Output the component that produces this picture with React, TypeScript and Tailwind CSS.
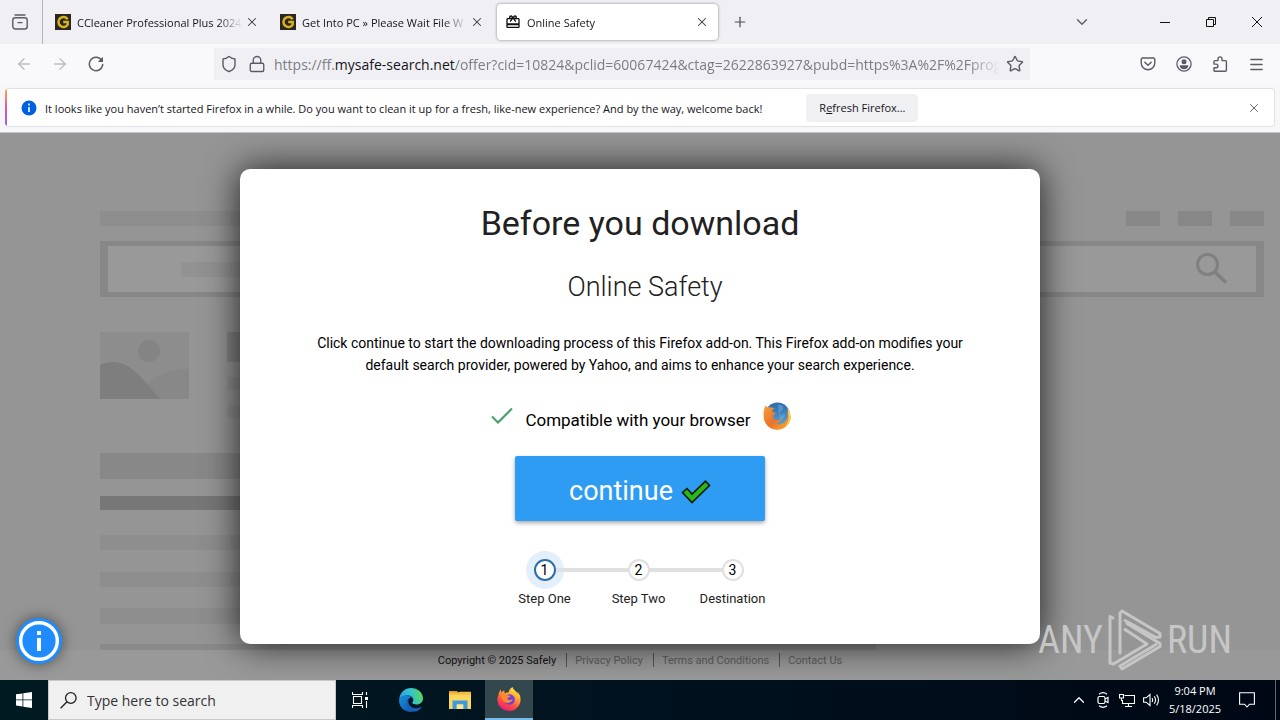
import React from "react";
import { ArrowLeft, ArrowRight, ChevronDown, ChevronUp, Lock, Menu, Plus, Shield, Star, X } from "lucide-react";

const UI = "font-['Open_Sans','Noto_Sans',sans-serif]";

function GIcon() {
  return (
    <svg viewBox="0 0 16 16" className="size-4 shrink-0" aria-hidden="true">
      <rect width="16" height="16" fill="#2b2622" />
      <path d="M12.6 5.2A5 5 0 1 0 12.7 10.6V8H8.2" fill="none" stroke="#d9b31c" strokeWidth="2.5" />
    </svg>
  );
}

function GiftIcon() {
  return (
    <svg viewBox="0 0 24 24" className="size-4 shrink-0" fill="#111" aria-hidden="true">
      <path d="M20 6h-2.18c.11-.31.18-.65.18-1 0-1.66-1.34-3-3-3-1.05 0-1.96.54-2.5 1.35l-.5.67-.5-.68C10.960 2.540 10.050 2 9 2 7.340 2 6 3.340 6 5c0 .35.07.69.18 1H4c-1.110 0-1.990.89-1.990 2L2 19c0 1.110.89 2 2 2h16c1.110 0 2-.89 2-2V8c0-1.110-.89-2-2-2zm-5-2c.55 0 1 .45 1 1s-.45 1-1 1-1-.45-1-1 .45-1 1-1zM9 4c.55 0 1 .45 1 1s-.45 1-1 1-1-.45-1-1 .45-1 1-1zm11 15H4v-2h16v2zm0-5H4V8h5.080L7 10.830 8.620 12 11 8.760l1-1.360 1 1.360L15.380 12 17 10.830 14.920 8H20v6z" />
    </svg>
  );
}

function Tab({ title, icon, active }: { title: string; icon: React.ReactNode; active?: boolean }) {
  return (
    <div
      className={
        active
          ? "flex h-9 w-[221px] items-center rounded bg-white pr-1.5 pl-2 shadow-[0_0_3px_rgba(0,0,0,0.45)]"
          : "flex h-9 w-[221px] items-center rounded pr-1.5 pl-2"
      }
    >
      {icon}
      <span className="ml-1.5 min-w-0 flex-1 overflow-hidden pt-0.5 text-[11px] leading-4 whitespace-nowrap text-[#15141a] [mask-image:linear-gradient(to_left,transparent,black_24px)]">
        {title}
      </span>
      <button type="button" aria-label={`Close ${title}`} className="flex size-5 items-center justify-center">
        <X className="size-3.5 text-[#3a3a42]" strokeWidth={1.8} />
      </button>
    </div>
  );
}

function TabStrip() {
  return (
    <header className="flex h-11 items-center bg-[#efeff4]">
      <button type="button" aria-label="Firefox View" className="flex h-11 w-[43px] items-center justify-center border-r border-[#b4b4bc] pr-0.5">
        <svg viewBox="0 0 16 16" className="size-4" fill="none" stroke="#5b5b66" strokeWidth="1.4" strokeLinecap="round" aria-hidden="true">
          <path d="M3 1h10" />
          <rect x="0.800" y="3.800" width="14.400" height="11.200" rx="2.500" />
          <path d="M6 8.600h4" />
        </svg>
      </button>
      <div className="ml-1 flex gap-1">
        <Tab title="CCleaner Professional Plus 2024" icon={<GIcon />} />
        <Tab title="Get Into PC » Please Wait File W" icon={<GIcon />} />
        <Tab title="Online Safety" icon={<GiftIcon />} active />
      </div>
      <button type="button" aria-label="New tab" className="ml-2 flex size-7 items-center justify-center">
        <Plus className="size-4 text-[#4a4a55]" strokeWidth={1.8} />
      </button>
      <div className="flex-1" />
      <button type="button" aria-label="List all tabs" className="mr-11 flex size-8 items-center justify-center">
        <ChevronDown className="size-[18px] text-[#5b5b66]" strokeWidth={1.8} />
      </button>
      <button type="button" aria-label="Minimize" className="flex h-8 w-[46px] items-center justify-center">
        <svg viewBox="0 0 10 10" className="size-2.5" stroke="#111" aria-hidden="true"><path d="M0 5.500h10" /></svg>
      </button>
      <button type="button" aria-label="Restore" className="flex h-8 w-[46px] items-center justify-center">
        <svg viewBox="0 0 10 10" className="size-2.5" fill="none" stroke="#111" aria-hidden="true"><path d="M.5 2.500h7v7h-7zM2.500 2.500v-2h7v7h-2" /></svg>
      </button>
      <button type="button" aria-label="Close window" className="flex h-8 w-[46px] items-center justify-center">
        <svg viewBox="0 0 10 10" className="size-2.5" fill="none" stroke="#111" aria-hidden="true"><path d="M0 0l10 10M10 0L0 10" /></svg>
      </button>
    </header>
  );
}

function NavButton({ label, children }: { label: string; children: React.ReactNode }) {
  return (
    <button type="button" aria-label={label} className="flex h-8 w-9 items-center justify-center text-[#5b5b66]">
      {children}
    </button>
  );
}

function NavBar() {
  return (
    <nav className="flex h-10 items-center bg-[#f9f9fb] px-1.5">
      <NavButton label="Back"><ArrowLeft className="size-[18px] text-[#bcbcc4]" strokeWidth={1.8} /></NavButton>
      <NavButton label="Forward"><ArrowRight className="size-[18px] text-[#bcbcc4]" strokeWidth={1.8} /></NavButton>
      <NavButton label="Reload">
        <svg viewBox="0 0 16 16" className="size-4" fill="none" stroke="#5b5b66" strokeWidth="1.500" aria-hidden="true">
          <path d="M13.900 4.800A6.700 6.700 0 1 0 14.700 8.500" strokeLinecap="round" />
          <path d="M15 .8v5.200H9.800z" fill="#5b5b66" stroke="none" />
        </svg>
      </NavButton>
      <div className="mx-[100px] flex h-8 min-w-0 flex-1 items-center bg-[#f0f0f4] pr-1 pl-1.5">
        <Shield className="size-[18px] shrink-0 text-[#5b5b66]" strokeWidth={1.9} />
        <Lock className="ml-2.5 size-[18px] shrink-0 text-[#5b5b66]" strokeWidth={1.8} />
        <label htmlFor="address" className="ml-2 pt-0.5 text-sm whitespace-nowrap text-[#7c7c85]">
          https://ff.<span className="text-[#15141a]">mysafe-search.net</span>
        </label>
        <input
          id="address"
          className="min-w-0 flex-1 bg-transparent pt-0.5 text-sm text-[#7c7c85] outline-none [mask-image:linear-gradient(to_left,transparent,black_32px)]"
          defaultValue="/offer?cid=10824&pclid=60067424&ctag=2622863927&pubd=https%3A%2F%2Fprogramdl.com"
        />
        <button type="button" aria-label="Bookmark this page" className="ml-1 flex h-7 w-[22px] items-center justify-center">
          <Star className="size-[18px] text-[#5b5b66]" strokeWidth={1.9} />
        </button>
      </div>
      <NavButton label="Save to Pocket">
        <svg viewBox="0 0 16 16" className="size-4" fill="none" stroke="currentColor" strokeWidth="1.400" strokeLinecap="round" strokeLinejoin="round" aria-hidden="true">
          <path d="M2.800 2h10.400a1.600 1.600 0 0 1 1.600 1.600V7a6.800 6.800 0 0 1-13.600 0V3.600A1.600 1.600 0 0 1 2.800 2z" />
          <path d="M4.800 6.300L8 9.300l3.200-3" />
        </svg>
      </NavButton>
      <NavButton label="Account">
        <svg viewBox="0 0 16 16" className="size-4" fill="currentColor" aria-hidden="true">
          <circle cx="8" cy="8" r="7.100" fill="none" stroke="currentColor" strokeWidth="1.300" />
          <circle cx="8" cy="5.700" r="2.500" />
          <path d="M3.600 9.300h8.800c0 2.500-2 3.900-4.400 3.900s-4.400-1.400-4.400-3.900z" />
        </svg>
      </NavButton>
      <NavButton label="Extensions">
        <svg viewBox="0 0 16 16" className="size-4" fill="none" stroke="currentColor" strokeWidth="1.400" strokeLinejoin="round" aria-hidden="true">
          <path d="M6 4.600V2.900a2 2 0 0 1 4 0v1.700h3.400a1 1 0 0 1 1 1v8.600a1 1 0 0 1-1 1H3a1 1 0 0 1-1-1v-2.500h2.100a1.800 1.800 0 0 0 0-3.600H2V5.600a1 1 0 0 1 1-1z" />
        </svg>
      </NavButton>
      <NavButton label="Open application menu">
        <Menu className="size-[17px]" strokeWidth={1.9} />
      </NavButton>
    </nav>
  );
}

function NotificationBar() {
  return (
    <div className="border-b border-[#c4c4c8] bg-[#f7f7f9] px-[5px] pt-1 pb-[5px]">
      <div className="flex h-[39px] items-center overflow-hidden rounded border border-l-0 border-[#e2e2e6] bg-white">
        <div className="h-full w-0.5 bg-linear-to-b from-[#ffa436] via-[#e5539a] to-[#9059ff]" />
        <svg viewBox="0 0 16 16" className="ml-3.5 size-4 shrink-0" aria-hidden="true">
          <circle cx="8" cy="8" r="7.500" fill="#0060df" />
          <path d="M8 3.500v2M8 7v5" stroke="#fff" strokeWidth="1.600" />
        </svg>
        <p className="ml-2 pt-0.5 text-[11px] leading-4 whitespace-nowrap text-[#15141a]">
          It looks like you haven’t started Firefox in a while. Do you want to clean it up for a fresh, like-new experience? And by the way, welcome back!
        </p>
        <button type="button" className="ml-11 h-7 w-28 rounded bg-[#f0f0f3] pt-0.5 text-[11px] whitespace-nowrap text-[#15141a]">
          R<span className="underline">e</span>fresh Firefox...
        </button>
        <div className="flex-1" />
        <button type="button" aria-label="Dismiss" className="mr-2.5 flex size-5 items-center justify-center">
          <X className="size-3.5 text-[#5b5b66]" strokeWidth={1.6} />
        </button>
      </div>
    </div>
  );
}

function Backdrop() {
  return (
    <div className="flex flex-col pt-[78px] pr-4 pl-[100px]" aria-hidden="true">
      <div className="flex h-[15px] gap-[18px]">
        <div className="w-1/3 bg-[#8e8e8e]" />
        <div className="flex-1" />
        <div className="w-[34px] bg-[#878787]" />
        <div className="w-[34px] bg-[#878787]" />
        <div className="w-[34px] bg-[#878787]" />
      </div>
      <div className="mt-[15px] flex h-14 items-center border-x-8 border-y-[5px] border-[#878787] bg-[#999999] pr-7 pl-[73px]">
        <div className="h-[15px] w-1/2 bg-[#929292]" />
        <div className="flex-1" />
        <svg viewBox="0 0 32 32" className="size-8" fill="none" stroke="#808080" strokeWidth="3.200" aria-hidden="true">
          <circle cx="11.500" cy="11.500" r="10" />
          <path d="M19 19l11 10.500" strokeWidth="3.800" />
        </svg>
      </div>
      <div className="mt-[35px] flex gap-[38px]">
        <svg viewBox="0 0 89 67" className="h-[67px] w-[89px]" aria-hidden="true">
          <rect width="89" height="67" fill="#8d8d8d" />
          <circle cx="49" cy="19" r="11" fill="#848484" />
          <path d="M36 67C48 50 60 37 89 37v30z" fill="#888" />
          <path d="M0 33C26 22 40 44 60 67H0z" fill="#7e7e7e" />
        </svg>
        <div className="flex h-[86px] w-1/4 flex-col justify-between">
          <div className="h-[30px] bg-[#848484]" />
          <div className="h-[13px] bg-[#8e8e8e]" />
          <div className="h-[13px] bg-[#8e8e8e]" />
        </div>
      </div>
      <div className="mt-[35px] h-[26px] w-2/3 bg-[#888888]" />
      <div className="mt-[17px] h-3.5 w-2/3 bg-[#777777]" />
      <div className="mt-[25px] h-[15px] w-2/3 bg-[#8e8e8e]" />
      <div className="mt-[22px] h-[15px] w-2/3 bg-[#8e8e8e]" />
      <div className="mt-[21px] h-4 w-2/3 bg-[#8e8e8e]" />
      <div className="mt-5 h-1.5 w-2/3 bg-[#8a8a8a]" />
    </div>
  );
}

function OldFirefox() {
  return (
    <svg viewBox="0 0 28 28" className="size-7" aria-hidden="true">
      <defs>
        <linearGradient id="globe" x1="0" y1="0" x2="0" y2="1">
          <stop offset="0" stopColor="#2c6aa8" />
          <stop offset="1" stopColor="#5aa7de" />
        </linearGradient>
        <linearGradient id="fox" x1="0" y1="0" x2="1" y2="1">
          <stop offset="0" stopColor="#f7a23c" />
          <stop offset=".5" stopColor="#e9722a" />
          <stop offset="1" stopColor="#f9b233" />
        </linearGradient>
      </defs>
      <circle cx="14.500" cy="13" r="12.500" fill="url(#globe)" />
      <path d="M15 3c4-1 6 2 5 4s-4 2-3 5 4 1 4-2c2 5-1 8-4 8" fill="#6db4e8" opacity=".5" />
      <path d="M2.500 3.500C3.500 5 5 5.500 7 5.300c2 .1 3 .7 4.500 1.300-1.800.7-2.500 1.800-2.300 3.300l3.300.7c.3 1.500-1.500 2-2.600 2.900.1 3 2.100 5 5.100 4.500 2-.4 2.500-1.700 4-1.200-1.500 3.700-4.500 5-7.500 4.700 6 2.500 12.500-1 13-7.500.2-2-.2-3.500-.7-5C27.500 11 28 14 27.500 17A13.600 13.600 0 0 1 .6 14.500C.3 10.500 1 6.500 2.500 3.500z" fill="url(#fox)" />
      <path d="M24.500 6c2.500 3 3.400 7 3 11-.8 3.500-2.500 6-5.500 8 3-4 4.500-8 3.500-12z" fill="#fbd04a" />
    </svg>
  );
}

const steps = [
  { n: 1, label: "Step One" },
  { n: 2, label: "Step Two" },
  { n: 3, label: "Destination" },
];

function Stepper() {
  return (
    <ol className="mt-[38px] mr-[3px] flex">
      {steps.map((s, i) => (
        <li key={s.n} className="flex w-[94px] flex-col items-center">
          <div className="flex w-full items-center">
            <div className={i === 0 ? "h-1 flex-1" : "h-1 flex-1 bg-[#e0e0e0]"} />
            <span
              className={
                i === 0
                  ? "flex size-[22px] items-center justify-center rounded-full border-2 border-[#2f6fa8] bg-white text-sm text-black ring-8 ring-[#e3effa]"
                  : "flex size-[22px] items-center justify-center rounded-full border-2 border-[#e0e0e0] bg-white text-sm text-black"
              }
            >
              {s.n}
            </span>
            <div className={i === 2 ? "h-1 flex-1" : "h-1 flex-1 bg-[#e0e0e0]"} />
          </div>
          <span className="mt-2 text-[13px] leading-5 text-[#222]">{s.label}</span>
        </li>
      ))}
    </ol>
  );
}

function OfferDialog() {
  return (
    <section
      role="dialog"
      aria-labelledby="offer-title"
      className="absolute inset-x-0 top-9 mx-auto flex h-[475px] max-w-[800px] flex-col items-center rounded-[10px] bg-white pt-8 text-center shadow-[0_0_36px_rgba(0,0,0,0.8)]"
    >
      <h1 id="offer-title" className="text-[34px] leading-11 text-[#212121]">Before you download</h1>
      <h2 className="mt-5 ml-2.5 text-[27px] leading-11 font-light text-[#212121]">Online Safety</h2>
      <p className="mt-[23px] max-w-[660px] text-sm leading-[22px] text-black">
        Click continue to start the downloading process of this Firefox add-on. This Firefox add-on modifies your default search provider, powered by Yahoo, and aims to enhance your search experience.
      </p>
      <div className="mt-[26px] ml-0.5 flex h-8 items-center">
        <svg viewBox="0 0 22 18" className="mr-3 mb-1 h-[18px] w-[22px]" fill="none" stroke="#43a067" strokeWidth="2" aria-hidden="true">
          <path d="M1 9.500l6 6L21 1.500" />
        </svg>
        <span className="mt-1 text-[17px] leading-6 text-black">Compatible with your browser</span>
        <span className="mb-1 ml-3"><OldFirefox /></span>
      </div>
      <button type="button" className="mt-[22px] flex h-[65px] w-[250px] items-center justify-center gap-2 rounded-xs bg-[#2f9cf4] pt-1.5 text-[27px] text-white shadow-[0_2px_4px_rgba(0,0,0,0.35)]">
        continue
        <svg viewBox="0 0 30 24" className="h-6 w-[30px]" aria-hidden="true">
          <path d="M1.500 12.500l4.500-4 5 5.500L24.500 1.200l4 4.300L11 22.500z" fill="#2db51c" stroke="#0b1a08" strokeWidth="1.600" />
        </svg>
      </button>
      <Stepper />
    </section>
  );
}

function Watermark() {
  return (
    <div className="absolute right-12 bottom-2 flex h-16 items-center gap-1 font-['Liberation_Sans_Narrow','Roboto_Condensed','Liberation_Sans',sans-serif] text-[38px] leading-none text-[#c6c6c6]">
      <span>ANY</span>
      <svg viewBox="0 0 56 62" className="h-[62px] w-14" fill="none" stroke="#c6c6c6" strokeWidth="3" strokeLinejoin="round" strokeLinecap="round" aria-hidden="true">
        <path d="M6 9L3 7.500v46.500l3.500 1L40 35l-22-14.500" />
        <path d="M13 44V4l2-2 38 22.500v3.500l-4 .5-31-17" />
        <path d="M20 14.500l33 20v3L15 60l-2-3 36-21.500" />
      </svg>
      <span>RUN</span>
    </div>
  );
}

function PageFooter() {
  return (
    <footer className="flex h-[30px] justify-center bg-[#999999] pt-[3px] text-[11px] leading-[15px]">
      <span className="px-2.5 text-[#111]">Copyright © 2025 Safely</span>
      <a href="#privacy" className="h-3.5 border-l border-[#555] pr-2.5 pl-2 text-[#5e5e5e]">Privacy Policy</a>
      <a href="#terms" className="h-3.5 border-l border-[#555] pr-2.5 pl-2 text-[#5e5e5e]">Terms and Conditions</a>
      <a href="#contact" className="h-3.5 border-l border-[#555] pr-2.5 pl-2 text-[#5e5e5e]">Contact Us</a>
    </footer>
  );
}

function EdgeIcon() {
  return (
    <svg viewBox="0 0 24 24" className="size-6" aria-hidden="true">
      <defs>
        <linearGradient id="edgeTop" x1="0" y1=".5" x2="1" y2=".3">
          <stop offset="0" stopColor="#2aa5e0" />
          <stop offset=".5" stopColor="#2fc3d2" />
          <stop offset="1" stopColor="#62d84e" />
        </linearGradient>
        <linearGradient id="edgeLow" x1="0" y1="0" x2="1" y2="1">
          <stop offset="0" stopColor="#1b8fe0" />
          <stop offset="1" stopColor="#0d4fa0" />
        </linearGradient>
      </defs>
      <path d="M.2 11C1 4.500 6 0 12 0c6.500 0 12 4.500 12 10.500 0 3.500-2.800 6-6.300 6-2.500 0-4.400-.8-4.400-1.700 0-.6 1-1 1-2.800C14.300 9.500 12 7.500 8.500 7.500 4.800 7.500 1.500 9 .2 11z" fill="url(#edgeTop)" />
      <path d="M.1 12C.5 8.500 4.500 7 8.500 7.500c2 .3 3.500 1 4.500 2-3 0-5 2.500-5 5.500 0 4.500 4 8 9 7.300-1.500 1.100-3.500 1.700-5.500 1.700C5 24-.4 18.500.1 12z" fill="url(#edgeLow)" />
      <path d="M9.700 11.200c-1.500 4.500 2 9 7 9 2 0 3.800-.6 5.300-1.300.4-.2.8.2.5.6-1.300 1.800-3 3.100-5.200 3.900-5.500.3-9.800-3.300-9.800-8 0-1.600.8-3.200 2.200-4.200z" fill="#1560b8" />
    </svg>
  );
}

function ExplorerIcon() {
  return (
    <svg viewBox="0 0 24 24" className="size-6" aria-hidden="true">
      <path d="M1 3h8l2 2.500h-10z" fill="#e29b1e" />
      <path d="M1 4.800h22V21H1z" fill="#fdd662" />
      <path d="M1 4.800h9l1.500-1H23v3H1z" fill="#f5bf3d" />
      <path d="M4.500 12.500h15V21h-4.300v-4.500H8.800V21H4.500z" fill="#3d9bdc" />
      <path d="M8.800 16.500h6.400V21H8.800z" fill="#fbe597" />
    </svg>
  );
}

function FirefoxIcon() {
  return (
    <svg viewBox="0 0 24 24" className="size-6" aria-hidden="true">
      <defs>
        <linearGradient id="ff" x1=".8" y1="0" x2=".3" y2="1">
          <stop offset="0" stopColor="#fff04a" />
          <stop offset=".35" stopColor="#ffa92e" />
          <stop offset=".7" stopColor="#ff4a45" />
          <stop offset="1" stopColor="#e8187c" />
        </linearGradient>
      </defs>
      <path d="M22.800 8.300c-.6-1.500-1.700-3-2.600-3.500.8 1.400 1.100 2.500 1.200 3C20 4.300 16.700 3.500 15.500 0c-2.800 1.600-3.700 4-3.700 5.200-1.500.1-2.700.5-3.800 1.200-.8-1.200-.7-2.300-.5-3.200-1.300.6-2.300 1.500-3 2.400-.6-.8-.5-2.300-.5-3.200C2.400 3.800 1.600 6 1.300 8.500.4 10 .2 12 .4 13.500A11.500 11.500 0 0 0 12 24c7 0 11.600-5.600 11.600-11.600 0-1.500-.3-2.900-.8-4.100z" fill="url(#ff)" />
      <circle cx="12.500" cy="12.500" r="5.300" fill="#6b3fe0" />
      <path d="M4.500 8.500c2-1.500 4-1 5.500-.2 2 .2 3.500.2 3.500.9-.6 1.300-3 1-3.200 2.800 1.400 1.600 3.800.5 5.500.6-1 3-5 4.300-8.300 2.400C5.500 13.500 4.500 11 4.500 8.500z" fill="#ff8a2b" />
    </svg>
  );
}

function Taskbar() {
  return (
    <footer className={`${UI} flex h-10 items-stretch bg-linear-to-r from-[#001a22] via-[#00121f] to-[#000714] text-white`}>
      <button type="button" aria-label="Start" className="flex w-12 items-center justify-center">
        <svg viewBox="0 0 16 16" className="size-4" fill="#fff" aria-hidden="true">
          <path d="M0 2.300l6.500-.9v6.100H0zM7.300 1.300L16 0v7.500H7.300zM0 8.300h6.500v6.200L0 13.600zM7.300 8.300H16V16l-8.700-1.300z" />
        </svg>
      </button>
      <label className="flex w-72 items-center border border-[#c8c8c8] bg-[#f0f0f0] pl-[11px]">
        <svg viewBox="0 0 17 17" className="size-[17px] shrink-0" fill="none" stroke="#222" strokeWidth="1.300" aria-hidden="true">
          <circle cx="10.800" cy="6" r="5.300" />
          <path d="M7 9.800L.6 16.300" />
        </svg>
        <input
          aria-label="Type here to search"
          placeholder="Type here to search"
          className="ml-2.5 min-w-0 flex-1 bg-transparent pt-0.5 text-sm outline-none placeholder:text-[#333]"
        />
      </label>
      <button type="button" aria-label="Task View" className="flex w-12 items-center justify-center">
        <svg viewBox="0 0 16 16" className="size-4" fill="none" stroke="#fff" strokeWidth="1.100" aria-hidden="true">
          <path d="M.5 0v2.500h10V0M.5 16v-2.500h10V16M1.500 4.500h8v7h-8zM14.500 0v3M14.500 9v7" />
          <path d="M13 5h3v3h-3z" fill="#fff" stroke="none" />
        </svg>
      </button>
      <div className="ml-[3px] flex gap-px">
        <button type="button" aria-label="Microsoft Edge" className="flex w-12 items-center justify-center"><EdgeIcon /></button>
        <button type="button" aria-label="File Explorer" className="flex w-12 items-center justify-center"><ExplorerIcon /></button>
        <button type="button" aria-label="Firefox" className="flex w-12 items-center justify-center border-b-2 border-[#76b9ed] bg-[#33474f]"><FirefoxIcon /></button>
      </div>
      <div className="flex-1" />
      <div className="flex">
        <button type="button" aria-label="Show hidden icons" className="flex w-6 items-center justify-center"><ChevronUp className="size-[18px]" strokeWidth={1.6} /></button>
        <button type="button" aria-label="Meet Now" className="flex w-6 items-center justify-center">
          <svg viewBox="0 0 16 16" className="size-4" fill="none" stroke="#fff" strokeWidth="1.200" aria-hidden="true">
            <rect x="3" y="4.500" width="7" height="7" rx="1.500" />
            <path d="M10 7l3-1.500v5L10 9M4 2.200Q8-.8 12 2.200M4 13.800q4 3 8 0" />
          </svg>
        </button>
        <button type="button" aria-label="Network" className="flex w-6 items-center justify-center">
          <svg viewBox="0 0 16 16" className="size-4" fill="none" stroke="#fff" strokeWidth="1.100" aria-hidden="true">
            <path d="M5.500 3.500h10v8H3.500V8M6 14.500h7M9.500 11.500v3M.5 2.500h4v3.500h-4zM2.500 6v2.500h1" />
          </svg>
        </button>
        <button type="button" aria-label="Volume" className="flex w-6 items-center justify-center">
          <svg viewBox="0 0 17 16" className="h-4 w-[17px]" fill="none" stroke="#fff" strokeWidth="1.100" aria-hidden="true">
            <path d="M.6 5.800h2.600L7 2.500v11L3.200 10.200H.6zM9 6q1.300 2 0 4M11.300 4.300q2.500 3.700 0 7.400M13.600 2.600q3.800 5.400 0 10.800" />
          </svg>
        </button>
      </div>
      <div className="flex w-16 flex-col items-center justify-center text-[11px] leading-[18px] whitespace-nowrap">
        <span>9:04 PM</span>
        <span>5/18/2025</span>
      </div>
      <button type="button" aria-label="Notifications" className="flex w-10 items-center justify-center">
        <svg viewBox="0 0 16 16" className="size-4" fill="none" stroke="#fff" strokeWidth="1.100" aria-hidden="true">
          <path d="M.6.8h14.800v11.400H10.500L8 15l-2.500-2.800H.6z" />
        </svg>
      </button>
      <div className="ml-2 w-[5px] border-l border-[#5c6670]" />
    </footer>
  );
}

export default function App() {
  return (
    <div className="flex min-h-screen flex-col bg-[#959595]">
      <div className={UI}>
        <TabStrip />
        <NavBar />
        <NotificationBar />
      </div>
      <main className="relative flex flex-1 flex-col justify-between overflow-hidden bg-[#959595] font-[Roboto,sans-serif]">
        <Backdrop />
        <PageFooter />
        <OfferDialog />
        <Watermark />
        <button type="button" aria-label="Information" className="absolute bottom-4 left-4 flex size-[46px] items-center justify-center rounded-full bg-[#1e8cff] shadow-[0_0_14px_rgba(0,0,0,0.5)]">
          <svg viewBox="0 0 40 40" className="size-10" aria-hidden="true">
            <circle cx="20" cy="20" r="18.300" fill="none" stroke="#fff" strokeWidth="3.400" />
            <path d="M18 10h4v4h-4zM18 17h4v13h-4z" fill="#fff" />
          </svg>
        </button>
      </main>
      <Taskbar />
    </div>
  );
}
